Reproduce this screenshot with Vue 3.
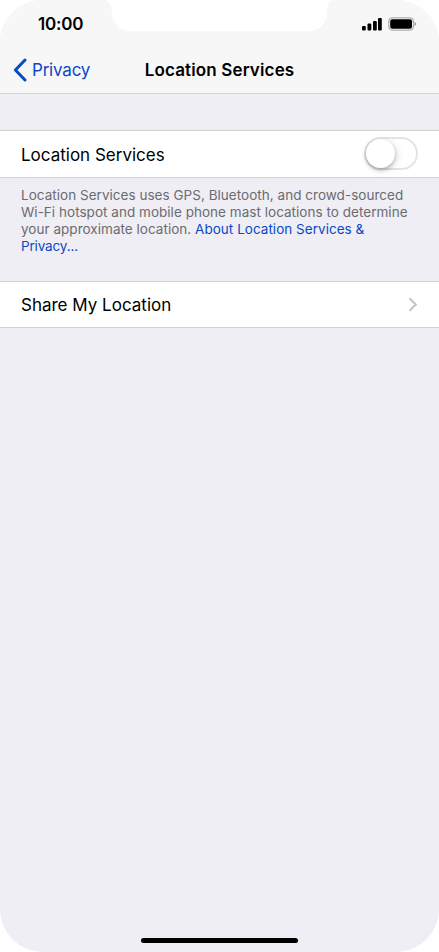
<script setup>
    import {ref} from 'vue';

    //Master switch for location services
    const enabled = ref(false)

    //Signal strength bars, left to right
    const bars = [
        {x: 0, h: 4.5},
        {x: 5.5, h: 7},
        {x: 11, h: 9.5},
        {x: 16, h: 12.5}
    ]
</script>

<template>
    <div class="phone">
        <svg class="notch" width="230" height="32" viewBox="0 0 230 32">
            <path d="M0 0C4 1 6.5 4 6.8 12C7 24 14 31 27 31H202C215 31 221.8 24 222 12C222.3 4 224 1 229 0Z" fill="#fff" />
        </svg>

        <header class="top">
            <div class="status">
                <span class="time">10:00</span>
                <svg class="signal" width="20" height="13" viewBox="0 0 20 13">
                    <rect v-for="bar in bars" :key="bar.x" :x="bar.x" :y="12.5 - bar.h" width="3.8" :height="bar.h" rx="1" />
                </svg>
                <svg class="battery" width="29" height="14" viewBox="0 0 29 14">
                    <rect x="0.8" y="0.8" width="24.6" height="12.4" rx="3.6" fill="#fff" stroke="#adadad" stroke-width="1.3" />
                    <rect x="2.2" y="2.2" width="21.8" height="9.6" rx="2" />
                    <path d="M26.5 4.8C28.4 5.5 28.4 8.5 26.5 9.2Z" fill="#999" />
                </svg>
            </div>
            <nav class="nav">
                <a class="back">
                    <svg width="14" height="24" viewBox="0 0 14 24">
                        <path d="M12 2L2.4 12L12 22" fill="none" stroke="#0a49c6" stroke-width="3" stroke-linecap="round" stroke-linejoin="round" />
                    </svg>
                    <span>Privacy</span>
                </a>
                <h1 class="title">Location Services</h1>
            </nav>
        </header>

        <main class="content">
            <div class="row services">
                <span class="label">Location Services</span>
                <button class="switch" :class="{on: enabled}" @click="enabled = !enabled">
                    <span class="knob"></span>
                </button>
            </div>
            <p class="note">
                Location Services uses GPS, Bluetooth, and crowd-sourced<br>
                Wi-Fi hotspot and mobile phone mast locations to determine<br>
                your approximate location. <a>About Location Services &amp;<br>
                <span class="more">Privacy...</span></a>
            </p>
            <div class="row share">
                <span class="label">Share My Location</span>
                <svg class="chevron" width="10" height="16" viewBox="0 0 10 16">
                    <path d="M1.5 1.3L7.8 7.5L1.5 13.7" fill="none" stroke="#c3c3c7" stroke-width="2" />
                </svg>
            </div>
        </main>

        <div class="home"></div>
    </div>
</template>

<style>
body {
    margin: 0;
    background: #fff;
}
</style>

<style scoped>
.phone {
    position: relative;
    display: flex;
    flex-direction: column;
    width: 439px;
    height: 952px;
    overflow: hidden;
    border-radius: 43px;
    background: #efeef4;
    color: #000;
    font-family: Inter, "Liberation Sans", sans-serif;
}

.notch {
    position: absolute;
    top: 0;
    left: 105px;
}

.top {
    box-sizing: border-box;
    height: 94px;
    background: #f7f7f7;
    border-bottom: 1px solid #d2d2d5;
}

.status {
    display: flex;
    align-items: center;
    height: 48px;
    padding: 0 22px 0 38px;
}

.time {
    flex: 1;
    font-size: 17px;
    font-weight: 600;
    letter-spacing: -0.2px;
}

.battery {
    margin-left: 6px;
}

.nav {
    display: grid;
    grid-template-columns: 132px 1fr 132px;
    align-items: center;
    height: 44px;
}

.back {
    display: flex;
    align-items: center;
    gap: 5px;
    padding-left: 13px;
    color: #0a49c6;
    font-size: 17px;
    letter-spacing: -0.2px;
}

.title {
    margin: 0;
    font-size: 17px;
    font-weight: 600;
    letter-spacing: 0.15px;
    text-align: center;
    white-space: nowrap;
}

.row {
    box-sizing: border-box;
    display: flex;
    align-items: center;
    justify-content: space-between;
    padding: 0 21px;
    background: #fff;
    border-top: 1px solid #d2d2d5;
    border-bottom: 1px solid #d2d2d5;
}

.label {
    font-size: 17px;
}

.services {
    height: 48px;
    margin-top: 36px;
}

.services .label {
    padding-top: 2px;
}

.share {
    height: 47px;
}

.switch {
    box-sizing: border-box;
    display: flex;
    width: 54px;
    height: 33px;
    margin: 0 0 1px;
    padding: 0;
    border: 2px solid #e4e4e4;
    border-radius: 17px;
    background: #fff;
}

.switch.on {
    justify-content: flex-end;
    background: #4cd964;
    border-color: #4cd964;
}

.knob {
    width: 29px;
    height: 29px;
    border-radius: 50%;
    background: #fff;
    box-shadow: 0 2px 4px rgba(0, 0, 0, 0.28), 3px 2px 8px rgba(0, 0, 0, 0.08);
}

.note {
    box-sizing: border-box;
    height: 103px;
    margin: 0;
    padding: 9px 0 0 21px;
    color: #6b6b70;
    font-size: 13.5px;
    letter-spacing: 0.03px;
    line-height: 17px;
    white-space: nowrap;
}

.note a {
    color: #0a49c6;
}

.more {
    letter-spacing: -0.15px;
}

.home {
    width: 157px;
    height: 5px;
    margin: auto auto 9px 141px;
    border-radius: 3px;
    background: #000;
}
</style>
